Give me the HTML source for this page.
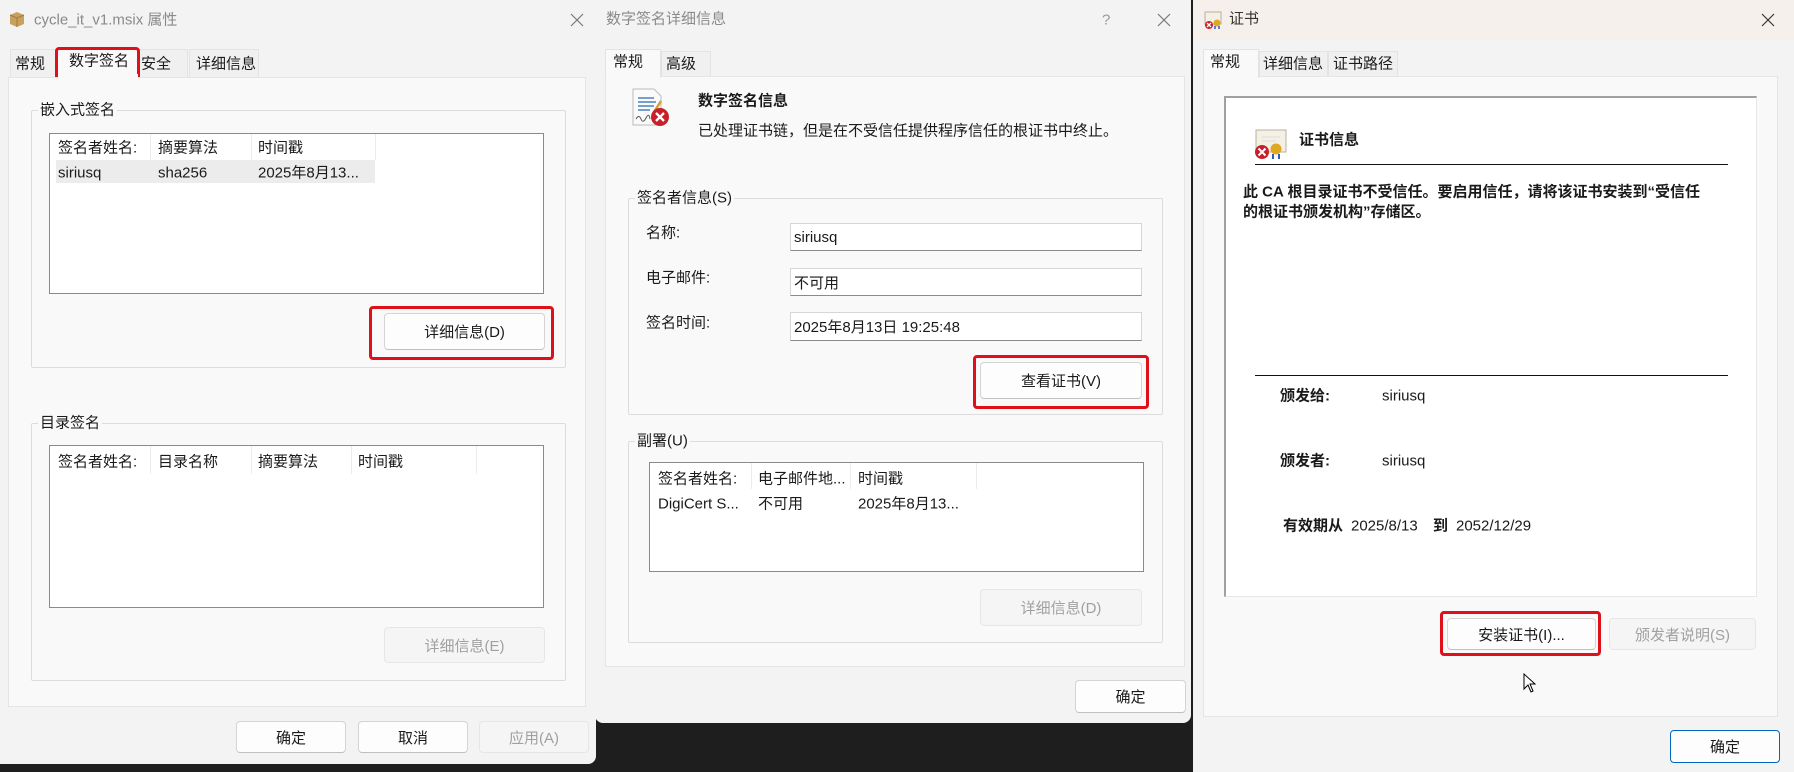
<!DOCTYPE html>
<html><head><meta charset="utf-8">
<style>
*{margin:0;padding:0;box-sizing:border-box}
body{width:1794px;height:772px;overflow:hidden;background:#1e1e1e;position:relative;font-family:"Liberation Sans","Noto Sans CJK SC",sans-serif;font-size:15px;color:#1a1a1a}
.a{position:absolute}
.win{position:absolute;background:#f3f3f3;border-radius:8px;overflow:hidden}
.t{position:absolute;white-space:nowrap;line-height:1;transform:translateY(-50%)}
.panel{position:absolute;background:#f9f9f9;border:1px solid #e5e5e5}
.tab{position:absolute;background:#f0f0f0;border:1px solid #e3e3e3;border-bottom:none}
.tab.act{background:#f9f9f9}
.gb{position:absolute;border:1px solid #dcdcdc;border-radius:2px}
.leg{position:absolute;background:#f9f9f9;padding:0 2px;white-space:nowrap;line-height:1;transform:translateY(-50%)}
.list{position:absolute;background:#fff;border:1px solid #8a8a8a}
.btn{position:absolute;background:#fdfdfd;border:1px solid #d4d4d4;border-bottom-color:#c0c0c0;border-radius:4px;display:flex;align-items:center;justify-content:center;white-space:nowrap}
.dis{background:#f5f5f5;border-color:#e6e6e6;color:#a0a0a0}
.red{position:absolute;border:3px solid #e0101a;border-radius:4px}
.inp{position:absolute;background:#fff;border:1px solid #d6d6d6;border-bottom:1px solid #8a8a8a;padding-left:3px;display:flex;align-items:center}
.div{position:absolute;width:1px;background:#ececec}
.b{font-weight:bold}
.x{position:absolute;width:16px;height:16px}
</style></head><body>

<!-- WINDOW 1 -->
<div class="win" style="left:0;top:0;width:596px;height:764px;border-radius:0 0 8px 0">
  <svg class="a" style="left:8px;top:10px" width="18" height="18" viewBox="0 0 18 18"><path d="M2 5 L9 2 L16 5 L16 14 L9 17 L2 14Z" fill="#c9a15f"/><path d="M2 5 L9 8 L16 5" stroke="#a17a3e" fill="none"/><path d="M9 8 V17" stroke="#a17a3e"/></svg>
  <div class="t" style="left:34px;top:20px;color:#8a8a8a;font-size:15px">cycle_it_v1.msix 属性</div>
  <svg class="x" style="left:569px;top:12px" viewBox="0 0 16 16"><path d="M2 2L14 14M14 2L2 14" stroke="#777" stroke-width="1.2"/></svg>
  <div class="tab" style="left:10px;top:49px;width:47px;height:28px"></div>
  <div class="t" style="left:15px;top:64px">常规</div>
  <div class="tab act" style="left:57px;top:47px;width:82px;height:31px;border:none"></div>
  <div class="t" style="left:69px;top:61px">数字签名</div>
  <div class="tab" style="left:139px;top:49px;width:49px;height:28px"></div>
  <div class="t" style="left:141px;top:64px">安全</div>
  <div class="tab" style="left:189px;top:49px;width:70px;height:28px"></div>
  <div class="t" style="left:196px;top:64px">详细信息</div>
  <div class="red" style="left:55px;top:47px;width:85px;height:34px"></div>
  <div class="panel" style="left:8px;top:77px;width:578px;height:630px"></div>
  <div class="tab act" style="left:58px;top:74px;width:80px;height:5px;border:none"></div>

  <div class="gb" style="left:31px;top:110px;width:535px;height:258px"></div>
  <div class="leg" style="left:38px;top:110px">嵌入式签名</div>
  <div class="list" style="left:49px;top:133px;width:495px;height:161px">
    <div class="a" style="left:6px;top:26px;width:319px;height:23px;background:#ececec"></div>
    <div class="div" style="left:100px;top:0;height:26px"></div>
    <div class="div" style="left:201px;top:0;height:26px"></div>
    <div class="div" style="left:325px;top:0;height:26px"></div>
    <div class="t" style="left:8px;top:14px">签名者姓名:</div>
    <div class="t" style="left:108px;top:14px">摘要算法</div>
    <div class="t" style="left:208px;top:14px">时间戳</div>
    <div class="t" style="left:8px;top:39px">siriusq</div>
    <div class="t" style="left:108px;top:39px">sha256</div>
    <div class="t" style="left:208px;top:39px">2025年8月13...</div>
  </div>
  <div class="btn" style="left:384px;top:313px;width:161px;height:37px">详细信息(D)</div>
  <div class="red" style="left:369px;top:306px;width:185px;height:54px"></div>

  <div class="gb" style="left:31px;top:423px;width:535px;height:258px"></div>
  <div class="leg" style="left:38px;top:423px">目录签名</div>
  <div class="list" style="left:49px;top:445px;width:495px;height:163px">
    <div class="div" style="left:100px;top:0;height:28px"></div>
    <div class="div" style="left:201px;top:0;height:28px"></div>
    <div class="div" style="left:301px;top:0;height:28px"></div>
    <div class="div" style="left:426px;top:0;height:28px"></div>
    <div class="t" style="left:8px;top:16px">签名者姓名:</div>
    <div class="t" style="left:108px;top:16px">目录名称</div>
    <div class="t" style="left:208px;top:16px">摘要算法</div>
    <div class="t" style="left:308px;top:16px">时间戳</div>
  </div>
  <div class="btn dis" style="left:384px;top:627px;width:161px;height:36px">详细信息(E)</div>

  <div class="btn" style="left:236px;top:721px;width:110px;height:32px">确定</div>
  <div class="btn" style="left:358px;top:721px;width:110px;height:32px">取消</div>
  <div class="btn dis" style="left:479px;top:721px;width:110px;height:32px">应用(A)</div>
</div>

<!-- WINDOW 2 -->
<div class="win" style="left:595px;top:0;width:596px;height:723px;border-radius:0 0 8px 8px">
  <div class="t" style="left:11px;top:19px;color:#8a8a8a">数字签名详细信息</div>
  <div class="t" style="left:507px;top:20px;color:#999">?</div>
  <svg class="x" style="left:561px;top:12px" viewBox="0 0 16 16"><path d="M2 2L14 14M14 2L2 14" stroke="#777" stroke-width="1.2"/></svg>
  <div class="panel" style="left:10px;top:76px;width:580px;height:591px"></div>
  <div class="tab act" style="left:10px;top:49px;width:56px;height:29px;border:1px solid #e3e3e3;border-bottom:none"></div>
  <div class="t" style="left:18px;top:62px">常规</div>
  <div class="tab" style="left:66px;top:51px;width:50px;height:25px"></div>
  <div class="t" style="left:71px;top:64px">高级</div>

  <svg class="a" style="left:35px;top:88px" width="42" height="40" viewBox="0 0 42 40"><path d="M3 1H24L31 8V37H3Z" fill="#fafafa" stroke="#bbb"/><path d="M8 10H24M8 14H26M8 18H24M8 22H20" stroke="#4a7fc0" stroke-width="1.5"/><path d="M6 31q3-5 5 0t5-1 4 1" stroke="#555" fill="none"/><path d="M24 24L31 13" stroke="#d4a030" stroke-width="2.5"/><circle cx="30" cy="29" r="9" fill="#c8202a"/><path d="M26 25L34 33M34 25L26 33" stroke="#fff" stroke-width="2.3"/></svg>
  <div class="t b" style="left:103px;top:101px">数字签名信息</div>
  <div class="t" style="left:103px;top:131px">已处理证书链，但是在不受信任提供程序信任的根证书中终止。</div>

  <div class="gb" style="left:33px;top:198px;width:535px;height:217px"></div>
  <div class="leg" style="left:40px;top:198px">签名者信息(S)</div>
  <div class="t" style="left:51px;top:233px">名称:</div>
  <div class="t" style="left:51px;top:278px">电子邮件:</div>
  <div class="t" style="left:51px;top:323px">签名时间:</div>
  <div class="inp" style="left:195px;top:223px;width:352px;height:28px">siriusq</div>
  <div class="inp" style="left:195px;top:268px;width:352px;height:28px">不可用</div>
  <div class="inp" style="left:195px;top:312px;width:352px;height:29px">2025年8月13日 19:25:48</div>
  <div class="btn" style="left:385px;top:362px;width:162px;height:37px">查看证书(V)</div>
  <div class="red" style="left:378px;top:355px;width:176px;height:54px"></div>

  <div class="gb" style="left:33px;top:441px;width:535px;height:202px"></div>
  <div class="leg" style="left:40px;top:441px">副署(U)</div>
  <div class="list" style="left:54px;top:462px;width:495px;height:110px">
    <div class="div" style="left:101px;top:0;height:26px"></div>
    <div class="div" style="left:200px;top:0;height:26px"></div>
    <div class="div" style="left:326px;top:0;height:26px"></div>
    <div class="t" style="left:8px;top:16px">签名者姓名:</div>
    <div class="t" style="left:108px;top:16px">电子邮件地...</div>
    <div class="t" style="left:208px;top:16px">时间戳</div>
    <div class="t" style="left:8px;top:41px">DigiCert S...</div>
    <div class="t" style="left:108px;top:41px">不可用</div>
    <div class="t" style="left:208px;top:41px">2025年8月13...</div>
  </div>
  <div class="btn dis" style="left:385px;top:589px;width:162px;height:37px">详细信息(D)</div>
  <div class="btn" style="left:480px;top:680px;width:111px;height:33px">确定</div>
</div>

<!-- WINDOW 3 -->
<div class="win" style="left:1193px;top:0;width:601px;height:772px;border-radius:0">
  <div class="a" style="left:0;top:0;width:601px;height:40px;background:#f5f0ec"></div>
  <svg class="a" style="left:10px;top:10px" width="20" height="20" viewBox="0 0 20 20"><rect x="2" y="2" width="16" height="12" fill="#f4f0e4" stroke="#b8b0a0"/><circle cx="6" cy="15" r="4" fill="#c8202a"/><path d="M4 13L8 17M8 13L4 17" stroke="#fff" stroke-width="1.3"/><circle cx="14" cy="13" r="3.5" fill="#e0a820"/><path d="M12 16v3M16 16v3" stroke="#2a5cc0" stroke-width="1.5"/></svg>
  <div class="t" style="left:36px;top:19px;color:#333">证书</div>
  <svg class="x" style="left:567px;top:12px" viewBox="0 0 16 16"><path d="M2 2L14 14M14 2L2 14" stroke="#333" stroke-width="1.2"/></svg>
  <div class="panel" style="left:10px;top:76px;width:575px;height:641px"></div>
  <div class="tab act" style="left:10px;top:49px;width:56px;height:29px;border:1px solid #e3e3e3;border-bottom:none"></div>
  <div class="t" style="left:17px;top:62px">常规</div>
  <div class="tab" style="left:66px;top:51px;width:69px;height:25px"></div>
  <div class="t" style="left:70px;top:64px">详细信息</div>
  <div class="tab" style="left:135px;top:51px;width:70px;height:25px"></div>
  <div class="t" style="left:140px;top:64px">证书路径</div>

  <div class="a" style="left:31px;top:96px;width:533px;height:501px;background:#fff;border-top:2px solid #a0a0a0;border-left:2px solid #a0a0a0;border-right:1px solid #e8e8e8;border-bottom:1px solid #e8e8e8"></div>
  <svg class="a" style="left:61px;top:128px" width="34" height="32" viewBox="0 0 34 32"><rect x="2" y="2" width="30" height="22" fill="#f4f0e4" stroke="#b8b0a0"/><path d="M8 9H26M8 13H22" stroke="#ddd"/><circle cx="8" cy="24" r="7" fill="#c8202a"/><path d="M4.5 20.5L11.5 27.5M11.5 20.5L4.5 27.5" stroke="#fff" stroke-width="2"/><circle cx="22" cy="21" r="5.5" fill="#e0a820"/><path d="M19 26v5M25 26v5" stroke="#2a5cc0" stroke-width="2"/></svg>
  <div class="t b" style="left:106px;top:140px">证书信息</div>
  <div class="a" style="left:62px;top:164px;width:473px;height:1px;background:#111"></div>
  <div class="t b" style="left:50px;top:192px">此 CA 根目录证书不受信任。要启用信任，请将该证书安装到“受信任</div>
  <div class="t b" style="left:50px;top:212px">的根证书颁发机构”存储区。</div>
  <div class="a" style="left:62px;top:375px;width:473px;height:1px;background:#111"></div>
  <div class="t b" style="left:87px;top:396px">颁发给:</div>
  <div class="t" style="left:189px;top:396px">siriusq</div>
  <div class="t b" style="left:87px;top:461px">颁发者:</div>
  <div class="t" style="left:189px;top:461px">siriusq</div>
  <div class="t b" style="left:90px;top:526px">有效期从</div>
  <div class="t" style="left:158px;top:526px">2025/8/13</div>
  <div class="t b" style="left:240px;top:526px">到</div>
  <div class="t" style="left:263px;top:526px">2052/12/29</div>

  <div class="btn" style="left:254px;top:618px;width:149px;height:32px">安装证书(I)...</div>
  <div class="red" style="left:247px;top:611px;width:161px;height:45px"></div>
  <div class="btn dis" style="left:416px;top:618px;width:147px;height:32px">颁发者说明(S)</div>
  <svg class="a" style="left:330px;top:673px" width="14" height="20" viewBox="0 0 14 20"><path d="M1 1V16L5 12L8 19L10 18L7 11H12Z" fill="#fff" stroke="#000"/></svg>
  <div class="btn" style="left:477px;top:730px;width:110px;height:33px;border:1px solid #0067c0">确定</div>
</div>
</body></html>
